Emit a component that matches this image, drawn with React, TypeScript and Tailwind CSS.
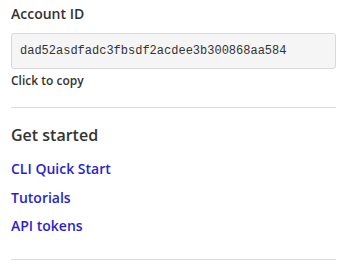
export default function App() {
  return (
    <div className="w-[349px] h-[279px] bg-white px-[11px] pr-[13px] text-[#333] font-['Open_Sans',sans-serif]">
      {/* Account ID */}
      <section className="pt-[4px]">
        <h3 className="text-[14px] leading-[20px] font-semibold">Account ID</h3>
        <div className="mt-[9px] h-[36px] flex items-center px-[8px] bg-[#f5f5f5] border border-[#d9d9d9] rounded-[3px]">
          <code className="font-['Liberation_Mono',monospace] text-[12px] text-[#333]">
            dad52asdfadc3fbsdf2acdee3b300868aa584
          </code>
        </div>
        <p className="mt-[3px] text-[12px] leading-[18px] font-semibold">Click to copy</p>
      </section>

      <hr className="mt-[17px] border-t border-[#dcdcdc]" />

      {/* Get started */}
      <section className="pt-[16px]">
        <h3 className="text-[16px] leading-[22px] font-semibold">Get started</h3>
        <ul className="mt-[9px] flex flex-col text-[14px] leading-[28.5px] font-semibold text-[#2a1fd0]">
          <li>CLI Quick Start</li>
          <li>Tutorials</li>
          <li>API tokens</li>
        </ul>
      </section>

      <hr className="mt-[18px] border-t border-[#dcdcdc]" />
    </div>
  );
}
